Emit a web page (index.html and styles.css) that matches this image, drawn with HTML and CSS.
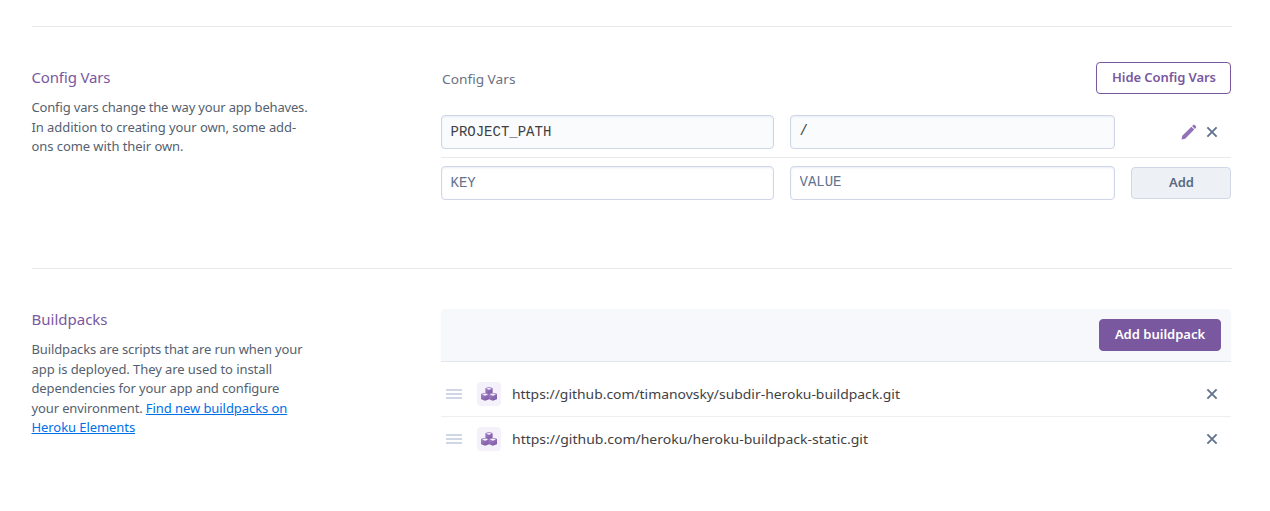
FILE: index.html
```html
<!DOCTYPE html>
<html lang="en">
<head>
<meta charset="utf-8">
<title>Settings</title>
<link rel="stylesheet" href="styles.css">
</head>
<body>
<svg class="defs" width="0" height="0" aria-hidden="true">
  <defs>
    <linearGradient id="purple" x1="0" y1="0" x2=".7" y2="1"><stop offset="0" stop-color="#aa88ca"/><stop offset="1" stop-color="#7d5aa5"/></linearGradient>
    <symbol id="close" viewBox="0 0 16 16"><path d="M3.4 3.4l9.2 9.2M12.600 3.4l-9.2 9.2" fill="none" stroke="#62738d" stroke-width="1.9"/></symbol>
    <symbol id="cube" viewBox="0 0 8 8"><path d="M4 .2L7.700 1.300Q8 1.400 8 1.800V5.800Q8 6.200 7.700 6.400L4 7.800.3 6.400Q0 6.200 0 5.800V1.800Q0 1.400.3 1.300z" fill="url(#purple)"/><path d="M4 .9l2.900 1.100L4 3.200 1.100 2z" fill="#f5f1fa"/></symbol>
    <symbol id="pack" viewBox="0 0 16 16"><use href="#cube" x="4.200" y=".7" width="7.600" height="7.800"/><use href="#cube" x="-.1" y="6.500" width="8.400" height="8.400"/><use href="#cube" x="7.700" y="6.500" width="8.400" height="8.400"/></symbol>
  </defs>
</svg>
<main class="page">
  <section class="section config">
    <div class="about">
      <h2 class="title tight">Config Vars</h2>
      <p class="description"><span class="tight">Config vars change the way your app behaves.</span><br>In addition to creating your own, some add-<br>ons come with their own.</p>
    </div>
    <div class="content">
      <div class="config-head">
        <span class="label">Config Vars</span>
        <button class="button outline">Hide Config Vars</button>
      </div>
      <div class="var-row saved">
        <input class="field key" value="PROJECT_PATH" readonly>
        <input class="field value" value="/" readonly>
        <div class="actions">
          <svg class="icon" viewBox="0 0 16 16"><path d="M.5 15.500l.8-3.700L10.400 2.800l2.800 2.800L4.200 14.700zM11.100 2.100l1.100-1q.8-.7 1.600 0l1.100 1.100q.7.8 0 1.600l-1 1.100z" fill="#9371b7"/></svg>
          <svg class="icon"><use href="#close"/></svg>
        </div>
      </div>
      <div class="var-row">
        <input class="field key" placeholder="KEY">
        <input class="field value" placeholder="VALUE">
        <button class="button muted">Add</button>
      </div>
    </div>
  </section>
  <section class="section">
    <div class="about">
      <h2 class="title">Buildpacks</h2>
      <p class="description"><span class="snug">Buildpacks are scripts that are run when your</span><br>app is deployed. They are used to install<br><span class="snug">dependencies for your app and configure</span><br><span class="snug">your environment. </span><a class="link" href="#">Find new buildpacks on<br>Heroku Elements</a></p>
    </div>
    <div class="content">
      <div class="toolbar"><button class="button primary">Add buildpack</button></div>
      <ul class="packs">
        <li class="pack"><span class="grip"></span><span class="tile"><svg class="icon"><use href="#pack"/></svg></span><span class="url long">https://github.com/timanovsky/subdir-heroku-buildpack.git</span><svg class="icon"><use href="#close"/></svg></li>
        <li class="pack"><span class="grip"></span><span class="tile"><svg class="icon"><use href="#pack"/></svg></span><span class="url">https://github.com/heroku/heroku-buildpack-static.git</span><svg class="icon"><use href="#close"/></svg></li>
      </ul>
    </div>
  </section>
</main>
</body>
</html>
```
FILE: styles.css
```css
* { box-sizing: border-box; }
body { margin: 0; background: #fff; color: #3f3f44; font-family: "Noto Sans", sans-serif; font-size: 13px; font-feature-settings: "liga" 1; }
.defs { display: block; }
.page { width: 1200px; margin-left: 32px; padding-top: 26px; }
.section { display: flex; border-top: 1px solid #e9e9ed; padding: 40px 1px 0 0; }
.config { height: 242px; padding-top: 35px; }
.about { width: 409px; }
.config .about { padding-top: 5px; }
.title { margin: 0 0 0 -.5px; font-size: 15px; font-weight: 400; line-height: 20px; color: #79589f; }
.description { margin: 11px 0 0 -.5px; line-height: 19.5px; color: #555f70; white-space: nowrap; letter-spacing: -.07px; }
.snug { letter-spacing: -.13px; }
.tight { letter-spacing: -.18px; }
.link { color: #0070e8; text-decoration: underline; }
.content { width: 790px; }
.config-head { display: flex; justify-content: space-between; height: 45px; }
.label { margin-left: .5px; line-height: 34px; color: #6b7280; transform: scaleX(1.053); transform-origin: left; }
.button { height: 32px; border: 1px solid; border-radius: 4px; font: 600 13px/28px "Noto Sans", sans-serif; font-feature-settings: "liga" 1; }
.outline { width: 135px; padding: 0 0 2px 1px; color: #79589f; background: #fff; border-color: #79589f; letter-spacing: -.07px; }
.muted { width: 100px; padding: 0 0 2px 1px; color: #596981; background: #edf1f6; border-color: #cfd7e6; }
.primary { width: 122px; padding: 0 0 2px; color: #fff; background: #79589f; border-color: #79589f; }
.var-row { display: flex; align-items: center; gap: 16px; height: 50px; }
.saved { height: 51px; border-bottom: 1px solid #e9e9ed; }
.field { height: 34px; border: 1px solid #cfd7e6; border-radius: 4px; padding: 0 8px 0 8.500px; font: 14px "Liberation Mono", monospace; color: #3f3f44; background: #fff; box-shadow: inset 0 1px 2px #e8edf5; outline: 0; }
.field::placeholder { color: #62738d; opacity: 1; }
.key { width: 333px; }
.value { width: 325px; padding-bottom: 2px; }
.saved .field { background: #f9fbfd; }
.actions { width: 100px; display: flex; justify-content: flex-end; gap: 7px; padding-right: 11px; }
.icon { display: block; width: 16px; height: 16px; }
.toolbar { height: 53px; display: flex; align-items: center; justify-content: flex-end; padding-right: 10px; background: #f7f8fc; border-bottom: 1px solid #e3e6ef; border-radius: 4px 4px 0 0; }
.packs { list-style: none; margin: 0; padding: 10px 0 0; }
.pack { display: flex; align-items: center; height: 45px; padding: 0 11px 0 5px; border-bottom: 1px solid #eeeef1; }
.pack:last-child { border-bottom-color: transparent; }
.grip { width: 16px; height: 10px; background: linear-gradient(#cfd7e6 0 2px, transparent 2px 4px, #cfd7e6 4px 6px, transparent 6px 8px, #cfd7e6 8px); }
.tile { display: grid; place-items: center; width: 24px; height: 24px; margin: 0 10.500px 0 15px; border-radius: 4px; background: #f5f1fa; }
.url { margin-right: auto; transform: scaleX(1.077); transform-origin: left; }
.long { transform: scaleX(1.068); }
```
